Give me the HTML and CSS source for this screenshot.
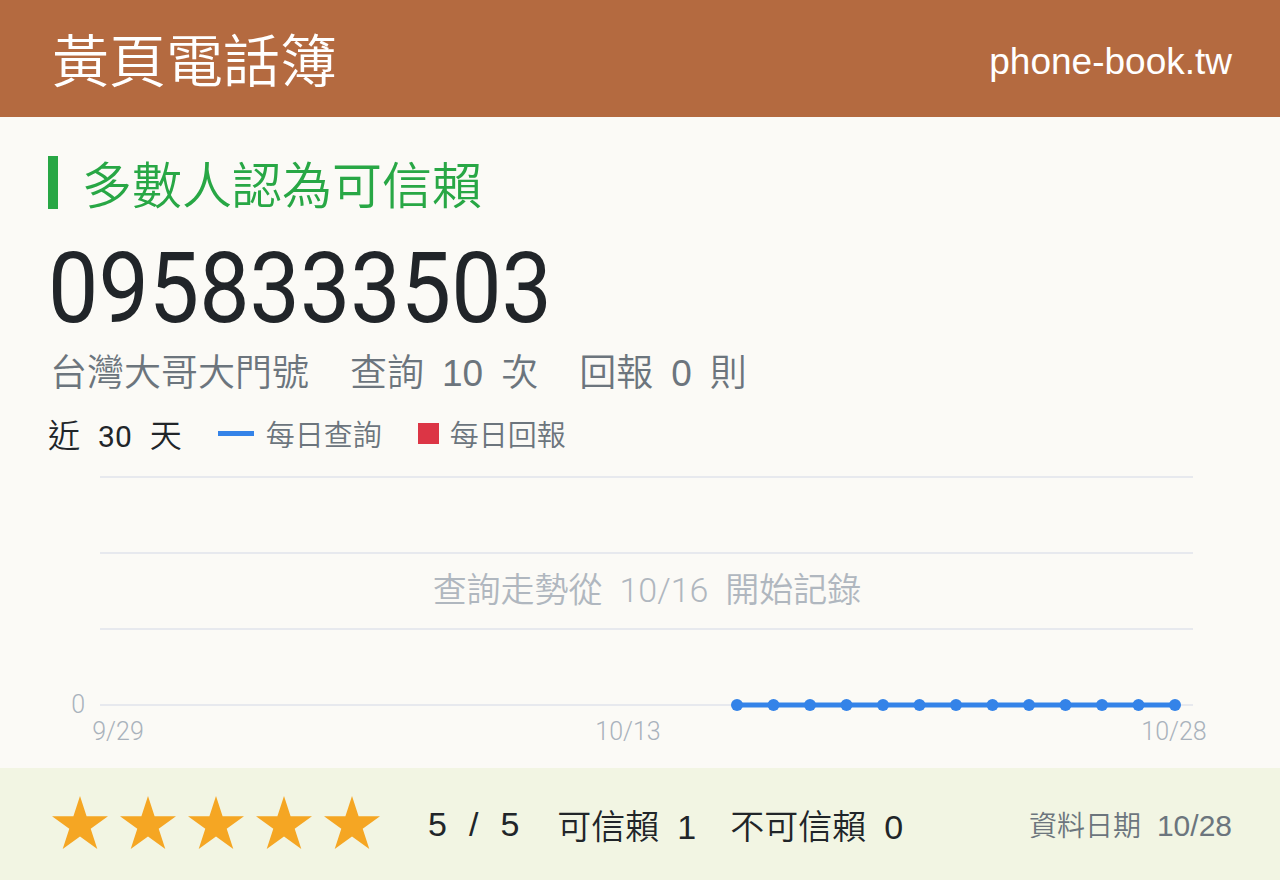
FILE: index.html
```html
<!DOCTYPE html>
<html lang="zh-Hant">
<head>
  <meta charset="UTF-8" />
  <meta name="viewport" content="width=device-width, initial-scale=1.0"/>
  <title>0958333503 - 黃頁電話簿</title>
  <link rel="stylesheet" href="styles.css">
</head>
<body>

  <div class="header">
    <div class="brand">黃頁電話簿</div>
    <div class="site">phone-book.tw</div>
  </div>

  <div class="main">
    <div class="verdict">多數人認為可信賴</div>
    <div class="number">0958333503</div>
    <div class="info">
      <span>台灣大哥大門號</span>
      <span>查詢<b>10</b>次</span>
      <span>回報<b>0</b>則</span>
    </div>

    <div class="legend">
      <span class="range">近<b>30</b>天</span>
      <span class="key"><i class="line"></i>每日查詢</span>
      <span class="key"><i class="box"></i>每日回報</span>
    </div>

    <svg class="chart" width="1184" height="292" viewBox="0 0 1184 292">
      <g stroke="#e7e9ee" stroke-width="2">
        <line x1="52" y1="17" x2="1145" y2="17"/>
        <line x1="52" y1="93" x2="1145" y2="93"/>
        <line x1="52" y1="169" x2="1145" y2="169"/>
        <line x1="52" y1="245" x2="1145" y2="245"/>
      </g>
      <g class="axis">
        <text x="37" y="253" text-anchor="end">0</text>
        <text x="70" y="280" text-anchor="middle">9/29</text>
        <text x="580" y="280" text-anchor="middle">10/13</text>
        <text x="1126" y="280" text-anchor="middle">10/28</text>
      </g>
      <text class="note" x="599" y="142" text-anchor="middle">查詢走勢從 10/16 開始記錄</text>
      <g id="series" fill="#3483e8">
        <line x1="689" y1="245" x2="1127" y2="245" stroke="#3483e8" stroke-width="5"/>
      </g>
    </svg>
  </div>

  <div class="footer">
    <div class="stars" id="stars"></div>
    <div class="score">5<span class="slash">/</span>5</div>
    <div class="votes">可信賴<b>1</b></div>
    <div class="votes">不可信賴<b>0</b></div>
    <div class="date">資料日期<span>10/28</span></div>
  </div>

  <script>
    // daily query points, 10/16 through 10/28
    const series = document.getElementById('series');
    for (let i = 0; i < 13; i++) {
      const dot = document.createElementNS('http://www.w3.org/2000/svg', 'circle');
      dot.setAttribute('cx', 689 + i * 36.5);
      dot.setAttribute('cy', 245);
      dot.setAttribute('r', 6);
      series.appendChild(dot);
    }

    const stars = document.getElementById('stars');
    const star = '<svg width="56" height="53" viewBox="0 0 56 53"><polygon fill="#f5a623" points="28,0 34.6,20.2 56,20.2 38.7,32.8 45.3,53 28,40.5 10.7,53 17.3,32.8 0,20.2 21.4,20.2"/></svg>';
    stars.innerHTML = star.repeat(5);
  </script>

</body>
</html>
```

FILE: styles.css
```css
body {
  margin: 0;
  height: 880px;
  display: flex;
  flex-direction: column;
  background: #fbfaf6;
  font-family: "Liberation Sans", "Noto Sans CJK TC", sans-serif;
  font-weight: 350;
  color: #212529;
  overflow: hidden;
}

b {
  font-weight: 400;
}

.header {
  height: 117px;
  flex-shrink: 0;
  display: flex;
  justify-content: space-between;
  align-items: center;
  padding: 0 48px 0 52px;
  background: #b46a40;
  color: #fff;
}

.brand {
  font-family: "Noto Sans CJK TC", sans-serif;
  font-size: 57px;
  line-height: 1;
  margin-top: -2px;
}

.site {
  font-size: 37px;
  font-weight: 400;
  margin-top: 6px;
}

.main {
  flex: 1;
  min-height: 0;
  padding: 39px 48px 0;
}

.verdict {
  font-family: "Noto Sans CJK TC", sans-serif;
  border-left: 10px solid #28a745;
  color: #28a745;
  font-size: 50px;
  line-height: 53px;
  padding-left: 24px;
}

/* tall narrow digits for the number itself */
.number {
  font-family: Roboto, sans-serif;
  font-weight: 400;
  font-size: 98px;
  line-height: 1;
  margin-top: 31px;
  transform: scaleX(0.915);
  transform-origin: left center;
}

.info {
  display: flex;
  gap: 41px;
  color: #6c757d;
  font-size: 37px;
  line-height: 1;
  margin-top: 17px;
  padding-left: 2px;
}

.info b {
  font-weight: 350;
  margin: 0 18px;
}

.legend {
  display: flex;
  align-items: center;
  margin-top: 18px;
  font-family: Roboto, "Noto Sans CJK TC", sans-serif;
}

.range {
  font-size: 32px;
  margin-right: 36px;
}

.range b {
  font-size: 30px;
  margin: 0 18px;
}

.key {
  display: flex;
  align-items: center;
  color: #6c757d;
  font-size: 29px;
  margin-right: 36px;
  font-family: "Noto Sans CJK TC", sans-serif;
}

.line {
  width: 36px;
  height: 5px;
  background: #3483e8;
  margin-right: 12px;
}

.box {
  width: 21px;
  height: 21px;
  background: #dc3545;
  margin-right: 11px;
}

.chart {
  display: block;
  margin-top: 4px;
}

.axis {
  font-family: Roboto, "Noto Sans CJK TC", sans-serif;
  font-size: 25px;
  fill: #a9b2bc;
}

.note {
  font-family: Roboto, "Noto Sans CJK TC", sans-serif;
  font-size: 34px;
  word-spacing: 8.6px;
  fill: #b0b7bf;
}

.footer {
  height: 112px;
  flex-shrink: 0;
  display: flex;
  align-items: center;
  padding: 0 48px 0 52px;
  background: #f2f5e3;
  font-size: 34px;
}

.stars {
  display: flex;
  gap: 12px;
  margin-right: 48px;
  margin-top: -3px;
}

.stars svg {
  display: block;
}

.score {
  font-weight: 400;
  margin-right: 38px;
}

.slash {
  margin: 0 22px;
}

.votes {
  margin-right: 34px;
}

.votes b {
  margin-left: 18px;
}

.date {
  margin-left: auto;
  color: #6c757d;
  font-size: 28px;
}

.date span {
  font-size: 30px;
  font-weight: 400;
  margin-left: 16px;
}
```
